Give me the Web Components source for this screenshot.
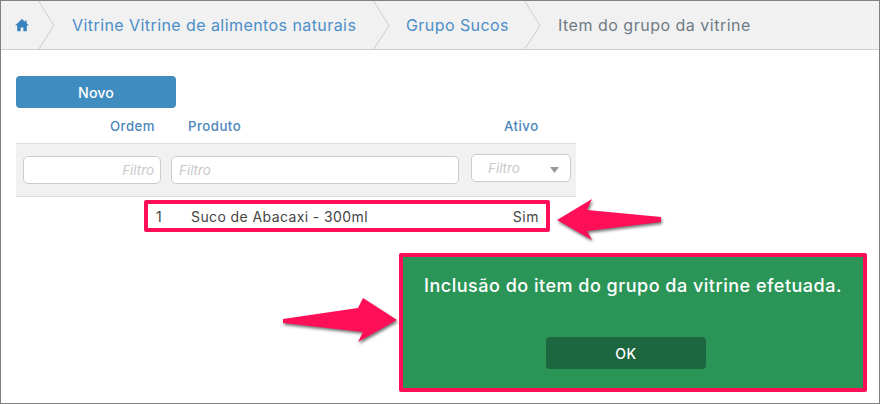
<!DOCTYPE html>
<html lang="pt-BR">
<head>
<meta charset="utf-8">
<title>Item do grupo da vitrine</title>
<style>
  html,body{ margin:0; padding:0; background:#fff; }
  body{ font-family:"Inter","Open Sans","Liberation Sans",sans-serif; }
</style>
</head>
<body>
<app-frame>
  <bread-crumbs>
    <crumb-item home></crumb-item>
    <crumb-item style="--w:335px;--pad:34px">Vitrine Vitrine de alimentos naturais</crumb-item>
    <crumb-item style="--w:151px;--pad:33px">Grupo Sucos</crumb-item>
    <crumb-item last style="--pad:34px">Item do grupo da vitrine</crumb-item>
  </bread-crumbs>
  <grid-page>
    <blue-button>Novo</blue-button>
    <item-grid>
      <grid-row-data ordem="1" produto="Suco de Abacaxi - 300ml" ativo="Sim"></grid-row-data>
    </item-grid>
  </grid-page>
  <note-arrow style="left:555px;top:197px" points="1,22 36,1 31,12 105,19 105,24 31,33 36,42" w="108" h="46"></note-arrow>
  <note-arrow style="left:282px;top:296px" points="0,22 75,11 80,1 114,23 75,45 80,35 0,26" w="118" h="50"></note-arrow>
  <success-toast>Inclusão do item do grupo da vitrine efetuada.</success-toast>
</app-frame>

<script>
  // small helper, every element below has the same boilerplate
  function shadow(el, html){
    el.attachShadow({mode:'open'}).innerHTML = html;
    return el.shadowRoot;
  }

  class AppFrame extends HTMLElement{
    constructor(){
      super();
      shadow(this, `<style>
        :host{ display:block; position:relative; box-sizing:border-box; width:880px; height:404px;
          border:1px solid #808080; overflow:hidden; background:#fff; }
      </style><slot></slot>`);
    }
  }

  class BreadCrumbs extends HTMLElement{
    constructor(){
      super();
      shadow(this, `<style>
        :host{ display:flex; box-sizing:border-box; height:49px; background:#f1f1f1; border-bottom:1px solid #ccc; }
      </style><slot></slot>`);
    }
  }

  class CrumbItem extends HTMLElement{
    constructor(){
      super();
      const home = this.hasAttribute('home');
      const last = this.hasAttribute('last');
      shadow(this, `<style>
        :host{ display:flex; align-items:center; position:relative; box-sizing:border-box; height:48px;
          width:var(--w,auto); padding-left:var(--pad,0); flex:none; font-size:16px; letter-spacing:.43px; color:#4b8ec8; }
        :host([home]){ width:37px; padding-left:13px; }
        :host([last]){ color:#6f7b85; letter-spacing:.5px; }
        .chev{ position:absolute; left:100%; top:0; }
        .home{ display:block; width:16px; height:16px; color:#3a82bd; }
      </style>
      ${home ? `<svg class="home" viewBox="0 0 16 16" aria-hidden="true"><path fill="currentColor" d="M8 2 1 8.6h2.2v5.6h3.4v-3.8h2.8v3.8h3.4V8.6H15l-2.4-2.3V3.4h-1.6v1.4Z"/></svg>` : '<slot></slot>'}
      ${last ? '' : `<svg class="chev" width="18" height="48" viewBox="0 0 18 48" aria-hidden="true"><path d="M.5 0 16 24.5.8 48" fill="none" stroke="#ccc" stroke-width="1"/></svg>`}`);
    }
  }

  class GridPage extends HTMLElement{
    constructor(){
      super();
      shadow(this, `<style>
        :host{ display:block; padding:26px 0 0 15px; }
      </style><slot></slot>`);
    }
  }

  class BlueButton extends HTMLElement{
    constructor(){
      super();
      shadow(this, `<style>
        :host{ display:flex; align-items:center; justify-content:center; width:160px; height:32px;
          border-radius:4px; background:#3f8dc0; color:#fff; font-size:14.2px; font-weight:500; letter-spacing:.1px; }
      </style><slot></slot>`);
    }
  }

  class ItemGrid extends HTMLElement{
    constructor(){
      super();
      shadow(this, `<style>
        :host{ display:block; width:560px; }
        .head{ display:flex; height:35px; align-items:center; font-size:13.2px; font-weight:500;
          letter-spacing:.5px; color:#4b85bb; }
        .ordem{ width:139px; text-align:right; }
        .produto{ margin-left:33px; flex:1; }
        .ativo{ width:72px; }
        .filters{ display:flex; box-sizing:border-box; height:54px; padding:12px 5px 0 7px; background:#f1f1f1;
          border-top:1px solid #ddd; border-bottom:1px solid #ddd; }
        filter-box:nth-child(1){ width:138px; margin-right:10px; }
        filter-box:nth-child(2){ width:288px; margin-right:12px; }
        filter-select{ margin-top:-2px; }
      </style>
      <div class="head"><span class="ordem">Ordem</span><span class="produto">Produto</span><span class="ativo">Ativo</span></div>
      <div class="filters">
        <filter-box align="right"></filter-box>
        <filter-box></filter-box>
        <filter-select></filter-select>
      </div>
      <slot></slot>`);
    }
  }

  class FilterBox extends HTMLElement{
    constructor(){
      super();
      const right = this.getAttribute('align') === 'right';
      shadow(this, `<style>
        :host{ display:block; flex:none; }
        .box{ box-sizing:border-box; height:28px; padding:0 ${right ? '6px' : '7px'}; display:flex; align-items:center;
          justify-content:${right ? 'flex-end' : 'flex-start'}; background:#fff; border:1px solid #ccc; border-radius:5px;
          font-size:13.4px; font-style:italic; color:#c9c9c9; }
      </style><div class="box">Filtro</div>`);
    }
  }

  class FilterSelect extends HTMLElement{
    constructor(){
      super();
      shadow(this, `<style>
        :host{ display:block; flex:none; }
        .box{ box-sizing:border-box; width:100px; height:28px; padding:0 11px 0 16px; display:flex; align-items:center;
          justify-content:space-between; background:#fff; border:1px solid #ccc; border-radius:5px;
          font-size:13.4px; font-style:italic; color:#c9c9c9; }
        svg{ display:block; margin-top:3px; }
      </style><div class="box">Filtro<svg width="9" height="6" viewBox="0 0 9 6" aria-hidden="true"><path d="M0 0h9L4.5 6Z" fill="#999"/></svg></div>`);
    }
  }

  class GridRowData extends HTMLElement{
    constructor(){
      super();
      shadow(this, `<style>
        :host{ display:flex; align-items:center; box-sizing:border-box; width:406px; height:32px; margin:3px 0 0 128px;
          border:4px solid #ff0f57; border-radius:2px; background:#fff; font-size:14px; letter-spacing:.4px; color:#444; }
        .o{ width:43px; padding-left:8px; box-sizing:border-box; }
        .p{ flex:1; }
        .a{ padding-right:7px; letter-spacing:.5px; }
      </style>
      <span class="o">${this.getAttribute('ordem')}</span>
      <span class="p">${this.getAttribute('produto')}</span>
      <span class="a">${this.getAttribute('ativo')}</span>`);
    }
  }

  // annotation arrows drawn over the screenshot
  class NoteArrow extends HTMLElement{
    constructor(){
      super();
      const w = this.getAttribute('w'), h = this.getAttribute('h');
      shadow(this, `<style>
        :host{ display:block; position:absolute; width:${w}px; height:${h}px; }
        svg{ display:block; overflow:visible; filter:drop-shadow(1px 2px 1.5px rgba(0,0,0,.55)); }
      </style><svg width="${w}" height="${h}" viewBox="0 0 ${w} ${h}" aria-hidden="true">
        <polygon points="${this.getAttribute('points')}" fill="#ff0f57"/></svg>`);
    }
  }

  class SuccessToast extends HTMLElement{
    constructor(){
      super();
      shadow(this, `<style>
        :host{ display:flex; flex-direction:column; align-items:center; position:absolute; left:398px; top:252px;
          box-sizing:border-box; width:468px; height:139px; padding-top:16px; background:#2b9558;
          border:4px solid #ff0f57; border-radius:2px; color:#fff; font-size:18px; font-weight:500; letter-spacing:.5px; }
        .msg{ height:64px; line-height:26px; white-space:nowrap; }
        button{ all:unset; box-sizing:border-box; display:flex; align-items:center; justify-content:center;
          width:160px; height:32px; margin-right:14px; background:#1e663f; border-radius:4px; font-size:14px; font-weight:500; color:#fff; }
      </style><div class="msg"><slot></slot></div><button>OK</button>`);
    }
  }

  customElements.define('app-frame', AppFrame);
  customElements.define('bread-crumbs', BreadCrumbs);
  customElements.define('crumb-item', CrumbItem);
  customElements.define('grid-page', GridPage);
  customElements.define('blue-button', BlueButton);
  customElements.define('item-grid', ItemGrid);
  customElements.define('filter-box', FilterBox);
  customElements.define('filter-select', FilterSelect);
  customElements.define('grid-row-data', GridRowData);
  customElements.define('note-arrow', NoteArrow);
  customElements.define('success-toast', SuccessToast);
</script>
</body>
</html>
